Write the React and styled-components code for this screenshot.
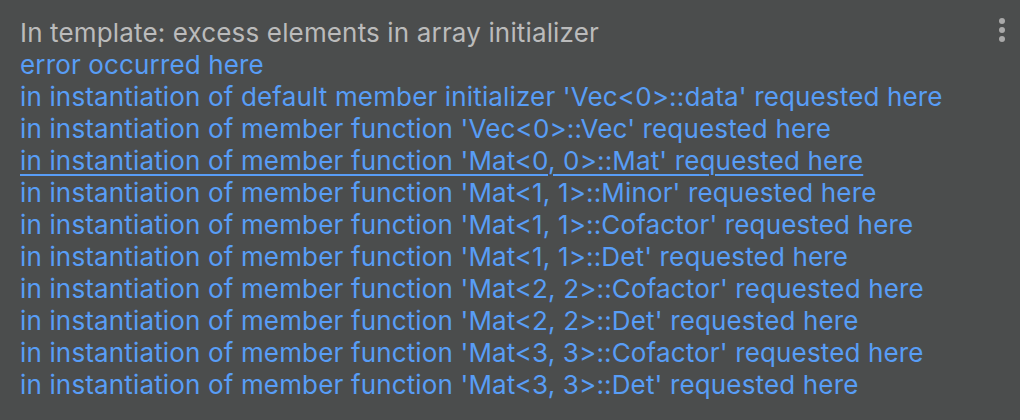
import { createGlobalStyle, styled } from 'styled-components'

const Global = createGlobalStyle`
  html, body { margin: 0; padding: 0; background: #4b4d4d; }
`

const Panel = styled.div`
  position: relative;
  width: 1020px;
  height: 420px;
  box-sizing: border-box;
  padding: 17px 20px 0;
  background: #4b4d4d;
  font-family: Inter, "Open Sans", sans-serif;
  font-size: 26px;
  letter-spacing: 0.15px;
  line-height: 32px;
`

const Title = styled.div`
  color: #bbbbbb;
  white-space: nowrap;
`

const TraceLink = styled.div`
  color: #589df6;
  white-space: nowrap;
  width: max-content;
  text-decoration: ${(p) => (p.$active ? 'underline' : 'none')};
  text-underline-offset: 4px;
  text-decoration-thickness: 2px;
`

const MoreButton = styled.div`
  position: absolute;
  top: 18px;
  right: 15px;
  display: flex;
  flex-direction: column;
  gap: 3px;
`

const Dot = styled.span`
  width: 6px;
  height: 6px;
  border-radius: 50%;
  background: #a9a9a9;
`

const lines = [
  'error occurred here',
  "in instantiation of default member initializer 'Vec<0>::data' requested here",
  "in instantiation of member function 'Vec<0>::Vec' requested here",
  "in instantiation of member function 'Mat<0, 0>::Mat' requested here",
  "in instantiation of member function 'Mat<1, 1>::Minor' requested here",
  "in instantiation of member function 'Mat<1, 1>::Cofactor' requested here",
  "in instantiation of member function 'Mat<1, 1>::Det' requested here",
  "in instantiation of member function 'Mat<2, 2>::Cofactor' requested here",
  "in instantiation of member function 'Mat<2, 2>::Det' requested here",
  "in instantiation of member function 'Mat<3, 3>::Cofactor' requested here",
  "in instantiation of member function 'Mat<3, 3>::Det' requested here",
]

export default function App() {
  return (
    <>
      <Global />
      <Panel>
        <Title>In template: excess elements in array initializer</Title>
        {lines.map((text, i) => (
          <TraceLink key={i} $active={i === 3}>{text}</TraceLink>
        ))}
        <MoreButton>
          <Dot />
          <Dot />
          <Dot />
        </MoreButton>
      </Panel>
    </>
  )
}
